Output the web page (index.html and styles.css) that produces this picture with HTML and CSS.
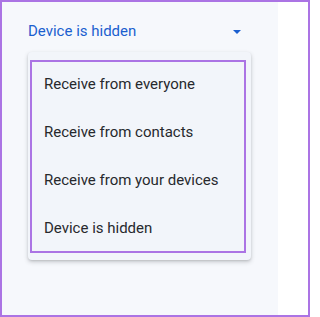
FILE: index.html
```html
<!DOCTYPE html>
<html>
<head>
<meta charset="utf-8">
<link rel="stylesheet" href="styles.css">
</head>
<body>
<div class="frame">
  <div class="panel">
    <div class="select">
      <span class="select-label">Device is hidden</span>
      <svg class="caret" width="8" height="4" viewBox="0 0 8 4"><path d="M0 0H8L4 4Z" fill="#1b5fcf"/></svg>
    </div>
    <div class="menu">
      <ul class="menu-list">
        <li class="menu-item">Receive from everyone</li>
        <li class="menu-item">Receive from contacts</li>
        <li class="menu-item">Receive from your devices</li>
        <li class="menu-item">Device is hidden</li>
      </ul>
      <div class="highlight"></div>
    </div>
  </div>
  <div class="side"></div>
</div>
</body>
</html>
```

FILE: styles.css
```css
html, body {
  margin: 0;
  padding: 0;
  background: #ffffff;
}
.frame {
  box-sizing: border-box;
  width: 310px;
  height: 317px;
  border: 2px solid #ab74e4;
  display: flex;
  font-family: Roboto, "Noto Sans", sans-serif;
}
.panel {
  width: 276px;
  background: #f6f8fc;
  padding: 10px 0 0 26px;
  box-sizing: border-box;
}
.side {
  flex: 1;
  background: #ffffff;
  margin-top: 8px;
}
.select {
  width: 223px;
  height: 38px;
  box-sizing: border-box;
  padding-right: 10px;
  display: flex;
  align-items: center;
  justify-content: space-between;
  margin-bottom: 2px;
}
.select-label {
  color: #1b5fcf;
  font-size: 15px;
}
.caret {
  display: block;
  margin-top: 2px;
}
.menu {
  position: relative;
  width: 223px;
  background: #f2f5fa;
  border-radius: 4px;
  padding: 8px 0;
  box-shadow: 0 2px 4px rgba(60, 64, 67, 0.25), 0 1px 2px rgba(60, 64, 67, 0.12);
}
.menu-list {
  list-style: none;
  margin: 0;
  padding: 0;
}
.menu-item {
  height: 48px;
  display: flex;
  align-items: center;
  padding-left: 16px;
  font-size: 15px;
  color: #27292d;
}
.highlight {
  position: absolute;
  left: 2px;
  top: 8px;
  right: 5px;
  bottom: 7px;
  border: 2px solid #ab74e4;
}
```
